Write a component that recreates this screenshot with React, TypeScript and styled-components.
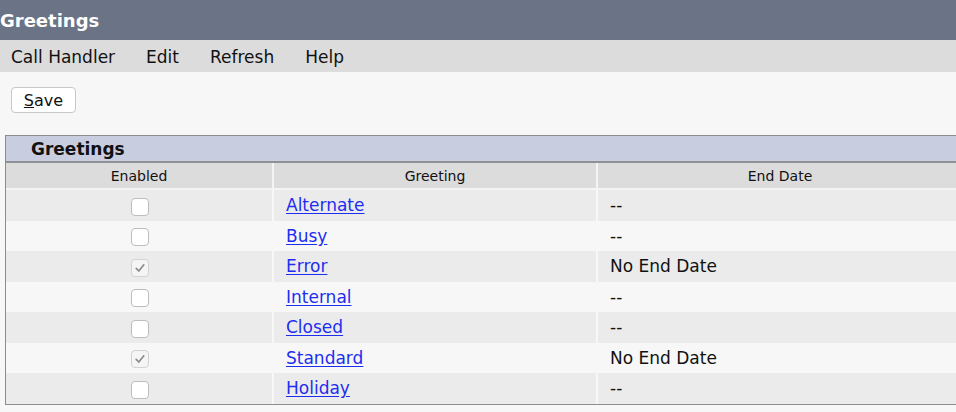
import React from "react";
import styled, { createGlobalStyle } from "styled-components";

const Global = createGlobalStyle`
  html, body { margin: 0; padding: 0; }
  body {
    background: #f7f7f7;
    font-family: "DejaVu Sans", Verdana, sans-serif;
    color: #111;
    overflow: hidden;
  }
`;

const Page = styled.div`
  width: 956px;
  height: 412px;
  display: flex;
  flex-direction: column;
  overflow: hidden;
`;

const TitleBar = styled.div`
  height: 40px;
  flex: none;
  background: #6b7386;
  color: #fff;
  font-weight: bold;
  font-size: 18px;
  display: flex;
  align-items: center;
  padding-left: 0;
`;

const MenuBar = styled.div`
  height: 32px;
  flex: none;
  background: #dcdcdc;
  display: flex;
  align-items: center;
  gap: 31px;
  padding-left: 11px;
  padding-top: 1px;
  box-sizing: border-box;
  font-size: 17px;
`;

const MenuItem = styled.span`
  color: #111;
`;

const Toolbar = styled.div`
  flex: none;
  padding: 15px 0 0 11px;
  height: 63px;
  box-sizing: border-box;
`;

const Button = styled.button`
  width: 65px;
  height: 26px;
  box-sizing: border-box;
  background: #fff;
  border: 1px solid #c8c8c8;
  border-radius: 4px;
  font-family: inherit;
  font-size: 16px;
  color: #111;
  padding: 0;
  display: flex;
  align-items: center;
  justify-content: center;
`;

const Panel = styled.div`
  flex: none;
  margin: 0 0 0 5px;
  width: 957px;
  border: 1px solid #8c8c8c;
  border-right: none;
  box-sizing: border-box;
`;

const PanelHeader = styled.div`
  height: 27px;
  background: #c8cde0;
  border-bottom: 2px solid #8e9196;
  box-sizing: border-box;
  font-weight: bold;
  font-size: 17px;
  display: flex;
  align-items: center;
  padding-left: 25px;
`;

const Grid = styled.div`
  display: grid;
  grid-template-columns: 266px 324px 1fr;
`;

const HeadCell = styled.div`
  height: 25px;
  background: #dcdcdc;
  border-bottom: 2px solid #f4f4f4;
  box-sizing: content-box;
  font-size: 14px;
  display: flex;
  align-items: center;
  justify-content: center;
  & + & {
    border-left: 2px solid #f4f4f4;
  }
`;

const Cell = styled.div<{ $odd: boolean; $align?: "center" | "left"; $sep?: boolean }>`
  height: 30.5px;
  background: ${(p) => (p.$odd ? "#ebebeb" : "#f7f7f7")};
  display: flex;
  align-items: center;
  justify-content: ${(p) => (p.$align === "center" ? "center" : "flex-start")};
  padding-left: ${(p) => (p.$align === "center" ? "0" : "12px")};
  font-size: 17px;
  margin-left: ${(p) => (p.$sep ? "2px" : "0")};
`;

const Link = styled.a`
  color: #1d2ef0;
  text-decoration: underline;
  text-underline-offset: 2px;
  cursor: pointer;
`;

const Box = styled.span<{ $checked: boolean }>`
  width: 18px;
  height: 18px;
  box-sizing: border-box;
  border: 1px solid ${(p) => (p.$checked ? "#d2d2d2" : "#bdbdbd")};
  border-radius: 4px;
  background: ${(p) => (p.$checked ? "#f5f5f5" : "#fff")};
  display: flex;
  align-items: center;
  justify-content: center;
  margin-left: 2px;
  margin-top: 3px;
`;

const Checkbox = ({ checked }: { checked: boolean }) => (
  <Box $checked={checked}>
    {checked && (
      <svg width="12" height="12" viewBox="0 0 11 11">
        <path d="M2 5.8 L4.4 8.3 L9 2.6" fill="none" stroke="#8a8a8a" strokeWidth="1.5" strokeLinecap="round" strokeLinejoin="round" />
      </svg>
    )}
  </Box>
);

const rows = [
  { name: "Alternate", on: false, end: "--" },
  { name: "Busy", on: false, end: "--" },
  { name: "Error", on: true, end: "No End Date" },
  { name: "Internal", on: false, end: "--" },
  { name: "Closed", on: false, end: "--" },
  { name: "Standard", on: true, end: "No End Date" },
  { name: "Holiday", on: false, end: "--" },
];

export default function App() {
  return (
    <Page>
      <Global />
      <TitleBar>Greetings</TitleBar>
      <MenuBar>
        <MenuItem>Call Handler</MenuItem>
        <MenuItem>Edit</MenuItem>
        <MenuItem>Refresh</MenuItem>
        <MenuItem>Help</MenuItem>
      </MenuBar>
      <Toolbar>
        <Button>
          <span>
            <u>S</u>ave
          </span>
        </Button>
      </Toolbar>
      <Panel>
        <PanelHeader>Greetings</PanelHeader>
        <Grid>
          <HeadCell>Enabled</HeadCell>
          <HeadCell>Greeting</HeadCell>
          <HeadCell>End Date</HeadCell>
          {rows.map((r, i) => (
            <React.Fragment key={r.name}>
              <Cell $odd={i % 2 === 0} $align="center">
                <Checkbox checked={r.on} />
              </Cell>
              <Cell $odd={i % 2 === 0} $sep>
                <Link>{r.name}</Link>
              </Cell>
              <Cell $odd={i % 2 === 0} $sep>
                {r.end}
              </Cell>
            </React.Fragment>
          ))}
        </Grid>
      </Panel>
    </Page>
  );
}
